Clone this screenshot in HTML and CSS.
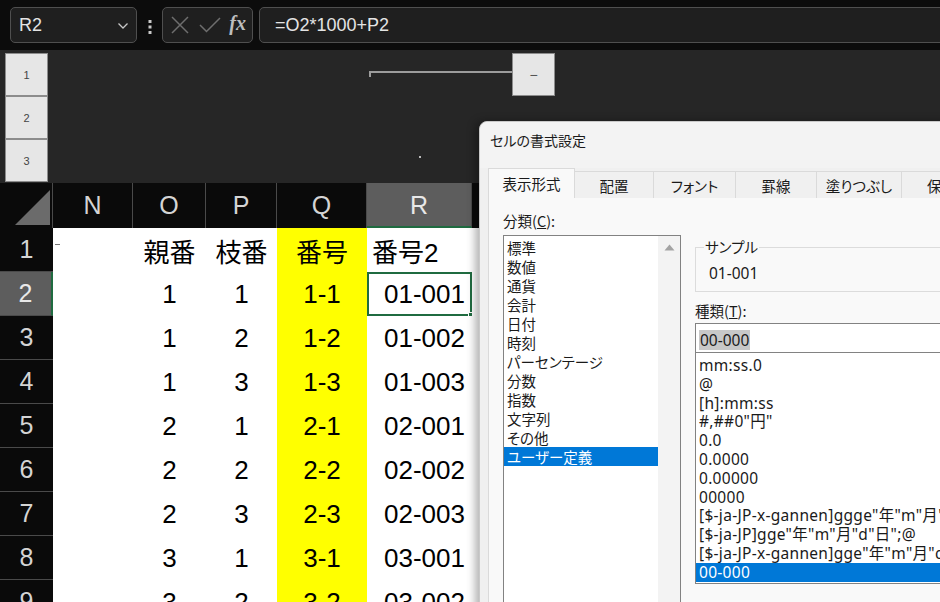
FILE: index.html
```html
<!DOCTYPE html>
<html lang="ja">
<head>
    <meta charset="UTF-8">
    <title>セルの書式設定</title>
    <link rel="stylesheet" href="styles.css">
</head>
<body>
    <div class="topbar">
        <div class="namebox">
            <span>R2</span>
            <svg class="chev" width="12" height="8" viewBox="0 0 12 8"><path d="M1.5 1.5 L6 6 L10.5 1.5" fill="none" stroke="#c8c8c8" stroke-width="1.3"/></svg>
        </div>
        <div class="kebab">
            <svg width="4" height="16" viewBox="0 0 4 16"><rect x="0.5" y="1" width="3" height="3" fill="#c8c8c8"/><rect x="0.5" y="6.5" width="3" height="3" fill="#c8c8c8"/><rect x="0.5" y="12" width="3" height="3" fill="#c8c8c8"/></svg>
        </div>
        <div class="fxbox">
            <svg width="20" height="20" viewBox="0 0 20 20"><path d="M2 2 L18 18 M18 2 L2 18" stroke="#6e6e6e" stroke-width="1.5"/></svg>
            <svg width="22" height="18" viewBox="0 0 22 18"><path d="M1 9 L7.5 15.5 L21 2" fill="none" stroke="#6e6e6e" stroke-width="1.5"/></svg>
            <span class="fx">fx</span>
        </div>
        <div class="formula">=O2*1000+P2</div>
    </div>

    <div class="outline">
        <div class="levels">
            <div class="level">1</div>
            <div class="level">2</div>
            <div class="level">3</div>
        </div>
        <div class="outline-canvas">
            <div class="bracket"></div>
            <div class="collapse">−</div>
            <div class="dot"></div>
        </div>
    </div>

    <div class="sheet">
        <div class="corner"><div class="tri"></div></div>
        <div class="colhead">N</div>
        <div class="colhead">O</div>
        <div class="colhead">P</div>
        <div class="colhead">Q</div>
        <div class="colhead sel">R</div>
        <div class="colhead">S</div>

        <div class="rowhead">1</div>
        <div class="cell"><span class="tick"></span></div>
        <div class="cell">親番</div>
        <div class="cell">枝番</div>
        <div class="cell yellow">番号</div>
        <div class="cell left">番号2</div>
        <div class="cell"></div>

        <div class="rowhead sel">2</div>
        <div class="cell"></div>
        <div class="cell">1</div>
        <div class="cell">1</div>
        <div class="cell yellow">1-1</div>
        <div class="cell right active">01-001<span class="handle"></span></div>
        <div class="cell"></div>

        <div class="rowhead">3</div>
        <div class="cell"></div>
        <div class="cell">1</div>
        <div class="cell">2</div>
        <div class="cell yellow">1-2</div>
        <div class="cell right">01-002</div>
        <div class="cell"></div>

        <div class="rowhead">4</div>
        <div class="cell"></div>
        <div class="cell">1</div>
        <div class="cell">3</div>
        <div class="cell yellow">1-3</div>
        <div class="cell right">01-003</div>
        <div class="cell"></div>

        <div class="rowhead">5</div>
        <div class="cell"></div>
        <div class="cell">2</div>
        <div class="cell">1</div>
        <div class="cell yellow">2-1</div>
        <div class="cell right">02-001</div>
        <div class="cell"></div>

        <div class="rowhead">6</div>
        <div class="cell"></div>
        <div class="cell">2</div>
        <div class="cell">2</div>
        <div class="cell yellow">2-2</div>
        <div class="cell right">02-002</div>
        <div class="cell"></div>

        <div class="rowhead">7</div>
        <div class="cell"></div>
        <div class="cell">2</div>
        <div class="cell">3</div>
        <div class="cell yellow">2-3</div>
        <div class="cell right">02-003</div>
        <div class="cell"></div>

        <div class="rowhead">8</div>
        <div class="cell"></div>
        <div class="cell">3</div>
        <div class="cell">1</div>
        <div class="cell yellow">3-1</div>
        <div class="cell right">03-001</div>
        <div class="cell"></div>

        <div class="rowhead">9</div>
        <div class="cell"></div>
        <div class="cell">3</div>
        <div class="cell">2</div>
        <div class="cell yellow">3-2</div>
        <div class="cell right">03-002</div>
        <div class="cell"></div>
    </div>

    <div class="dialog">
        <div class="dialog-title">セルの書式設定</div>
        <div class="tabs">
            <div class="tab active">表示形式</div>
            <div class="tab">配置</div>
            <div class="tab">フォント</div>
            <div class="tab">罫線</div>
            <div class="tab">塗りつぶし</div>
            <div class="tab">保護</div>
        </div>
        <div class="panel">
            <div class="category">
                <div class="label">分類(<u>C</u>):</div>
                <div class="listbox">
                    <ul class="cat-list">
                        <li>標準</li>
                        <li>数値</li>
                        <li>通貨</li>
                        <li>会計</li>
                        <li>日付</li>
                        <li>時刻</li>
                        <li>パーセンテージ</li>
                        <li>分数</li>
                        <li>指数</li>
                        <li>文字列</li>
                        <li>その他</li>
                        <li class="picked">ユーザー定義</li>
                    </ul>
                    <div class="scrollbar">
                        <svg width="11" height="7" viewBox="0 0 11 7"><path d="M0.5 6.5 L5.5 0.5 L10.5 6.5 Z" fill="#a3a3a3"/></svg>
                    </div>
                </div>
            </div>
            <div class="detail">
                <fieldset class="sample">
                    <legend>サンプル</legend>
                    <div class="sample-value">01-001</div>
                </fieldset>
                <div class="label">種類(<u>T</u>):</div>
                <div class="type-input"><span class="hilite">00-000</span></div>
                <ul class="type-list">
                    <li>mm:ss.0</li>
                    <li>@</li>
                    <li>[h]:mm:ss</li>
                    <li>#,##0"円"</li>
                    <li>0.0</li>
                    <li>0.0000</li>
                    <li>0.00000</li>
                    <li>00000</li>
                    <li>[$-ja-JP-x-gannen]ggge"年"m"月"d"日";@</li>
                    <li>[$-ja-JP]gge"年"m"月"d"日";@</li>
                    <li>[$-ja-JP-x-gannen]gge"年"m"月"d"日";@</li>
                    <li class="picked">00-000</li>
                </ul>
            </div>
        </div>
    </div>
</body>
</html>
```

FILE: styles.css
```css
body {
    margin: 0;
    width: 940px;
    height: 602px;
    overflow: hidden;
    position: relative;
    background: #0c0c0c;
    font-family: "Liberation Sans", "Noto Sans CJK JP", sans-serif;
}

/* formula bar */

.topbar {
    height: 50px;
    box-sizing: border-box;
    padding: 7px 0 0 10px;
    display: flex;
    background: #0c0c0c;
}

.namebox,
.fxbox,
.formula {
    height: 36px;
    box-sizing: border-box;
    border: 1px solid #4f4f4f;
    border-radius: 5px;
    background: #1f1f1f;
    display: flex;
    align-items: center;
}

.namebox {
    width: 127px;
    padding: 0 7px 0 8px;
    justify-content: space-between;
    color: #e4e4e4;
    font-size: 18px;
}

.chev {
    margin-top: 2px;
}

.kebab {
    width: 25px;
    display: flex;
    align-items: center;
    justify-content: center;
    padding-bottom: 4px;
}

.fxbox {
    width: 91px;
    padding: 0 6px 0 7px;
    justify-content: space-between;
}

.fx {
    font-family: "Liberation Serif", serif;
    font-style: italic;
    font-weight: bold;
    font-size: 20px;
    color: #bdbdbd;
    margin-bottom: 3px;
}

.formula {
    flex: 1;
    margin-left: 6px;
    margin-right: -10px;
    padding-left: 15px;
    color: #e4e4e4;
    font-size: 18px;
}

/* outline area */

.outline {
    height: 133px;
    display: flex;
    background: #262626;
}

.levels {
    padding: 3px 0 0 5px;
}

.level {
    width: 43px;
    height: 43px;
    box-sizing: border-box;
    border: 1px solid #8c8c8c;
    background: #e6e6e6;
    color: #444;
    font-size: 11px;
    display: flex;
    align-items: center;
    justify-content: center;
}

.outline-canvas {
    position: relative;
    flex: 1;
}

.bracket {
    position: absolute;
    left: 321px;
    top: 21px;
    width: 143px;
    height: 4px;
    border-top: 2px solid #9c9c9c;
    border-left: 2px solid #9c9c9c;
}

.collapse {
    position: absolute;
    left: 464px;
    top: 3px;
    width: 43px;
    height: 43px;
    box-sizing: border-box;
    border: 1px solid #8c8c8c;
    background: #e6e6e6;
    color: #555;
    font-size: 14px;
    display: flex;
    align-items: center;
    justify-content: center;
}

.dot {
    position: absolute;
    left: 371px;
    top: 106px;
    width: 2px;
    height: 2px;
    background: #bbb;
}

/* sheet */

.sheet {
    display: grid;
    grid-template-columns: 53px 80px 73px 71px 90px 105px 1fr;
    grid-template-rows: 45px repeat(9, 44px);
}

.corner {
    background: #0a0a0a;
    position: relative;
    border-right: 1px solid #4a4a4a;
}

.tri {
    position: absolute;
    left: 15px;
    top: 7px;
    width: 0;
    height: 0;
    border-left: 35px solid transparent;
    border-bottom: 35px solid #6b6b6b;
}

.colhead {
    background: #0a0a0a;
    color: #d4d4d4;
    font-size: 25px;
    display: flex;
    align-items: center;
    justify-content: center;
    border-right: 1px solid #4a4a4a;
}

.colhead.sel {
    background: #5d5d5d;
    color: #e8e8e8;
    border-bottom: 2px solid #1f6b40;
    box-sizing: border-box;
    padding-top: 2px;
}

.rowhead {
    background: #0a0a0a;
    color: #d4d4d4;
    font-size: 25px;
    display: flex;
    align-items: center;
    justify-content: center;
    border-bottom: 1px solid #4a4a4a;
}

.rowhead.sel {
    background: #5d5d5d;
    color: #e8e8e8;
    border-right: 2px solid #1f6b40;
}

.cell {
    background: #fff;
    color: #000;
    font-size: 26px;
    display: flex;
    align-items: center;
    justify-content: center;
    position: relative;
}

.cell.yellow {
    background: #ffff00;
}

.cell.left {
    justify-content: flex-start;
    padding-left: 5px;
}

.cell.right {
    justify-content: flex-end;
    padding-right: 7px;
}

.cell.active {
    box-shadow: inset 0 0 0 2px #1f6b40;
}

.handle {
    position: absolute;
    right: -3px;
    bottom: -3px;
    width: 5px;
    height: 5px;
    background: #1f6b40;
    border: 1px solid #fff;
}

.tick {
    position: absolute;
    left: 2px;
    top: 16px;
    width: 5px;
    height: 1px;
    background: #777;
}

/* format cells dialog */

.dialog {
    position: absolute;
    left: 479px;
    top: 121px;
    width: 520px;
    height: 520px;
    background: #f0f0f0;
    border-top-left-radius: 8px;
    border: 1px solid #c9c9c9;
    box-shadow: -4px 0 9px rgba(0, 0, 0, 0.3);
    font-family: "Noto Sans CJK JP", sans-serif;
    font-feature-settings: "palt";
    color: #1a1a1a;
}

.dialog-title {
    height: 46px;
    padding-left: 10px;
    font-size: 14px;
    line-height: 36px;
    background: #f3f3f3;
    border-top-left-radius: 8px;
}

.tabs {
    display: flex;
    align-items: flex-end;
    height: 30px;
    padding-left: 8px;
}

.tab {
    height: 27px;
    box-sizing: border-box;
    border: 1px solid #dadada;
    border-left: none;
    border-bottom: none;
    font-size: 14.5px;
    line-height: 27px;
    text-align: center;
    background: #f0f0f0;
}

.tab:nth-child(1) { width: 87px; }
.tab:nth-child(2) { width: 79px; }
.tab:nth-child(3) { width: 82px; }
.tab:nth-child(4) { width: 81px; }
.tab:nth-child(5) { width: 85px; }
.tab:nth-child(6) { width: 80px; }

.tab.active {
    height: 30px;
    line-height: 30px;
    background: #f9f9f9;
    border-left: 1px solid #dadada;
}

.panel {
    margin-left: 8px;
    height: 420px;
    background: #f9f9f9;
    border-left: 1px solid #dadada;
    display: flex;
    gap: 14px;
    padding: 14px 0 0 14px;
}

.label {
    font-size: 14.5px;
    line-height: 18px;
    height: 18px;
}

.category .label {
    margin-bottom: 5px;
}

.listbox {
    width: 178px;
    height: 400px;
    box-sizing: border-box;
    border: 1px solid #828282;
    background: #fff;
    display: flex;
}

.cat-list {
    list-style: none;
    margin: 0;
    padding: 2px 0 0 0;
    flex: 1;
}

.cat-list li {
    height: 19px;
    line-height: 19px;
    font-size: 14.5px;
    padding-left: 3px;
}

.picked {
    background: #0078d7;
    color: #fff;
}

.scrollbar {
    width: 22px;
    background: #f3f3f3;
    display: flex;
    justify-content: center;
    align-items: flex-start;
    padding-top: 8px;
    box-sizing: border-box;
}

.detail {
    width: 300px;
}

.sample {
    margin: 26px 0 0 0;
    padding: 8px 12px 4px 13px;
    border: 1px solid #dcdcdc;
    height: 54px;
    box-sizing: border-box;
}

.sample legend {
    font-size: 14.5px;
    line-height: 18px;
    padding: 0 1px;
    margin-left: -5px;
}

.sample-value {
    font-family: "Noto Sans", "Noto Sans CJK JP", sans-serif;
    font-size: 15.5px;
    line-height: 18px;
}

.detail .label {
    margin: 10px 0 3px 0;
}

.type-input {
    height: 30px;
    box-sizing: border-box;
    border: 1px solid #828282;
    background: #fff;
    padding: 3px 0 0 3px;
}

.hilite {
    display: inline-block;
    height: 20px;
    line-height: 20px;
    padding: 0 1px;
    background: #c8c8c8;
    font-family: "Noto Sans", sans-serif;
    font-size: 15.5px;
}

.type-list {
    list-style: none;
    margin: -1px 0 0 0;
    padding: 3px 0 0 0;
    height: 232px;
    box-sizing: border-box;
    border: 1px solid #828282;
    background: #fff;
    font-family: "Noto Sans", "Noto Sans CJK JP", sans-serif;
    font-size: 15.5px;
    letter-spacing: 0.3px;
}

.type-list li {
    height: 18.8px;
    line-height: 18.8px;
    padding-left: 3px;
    white-space: nowrap;
}
```
